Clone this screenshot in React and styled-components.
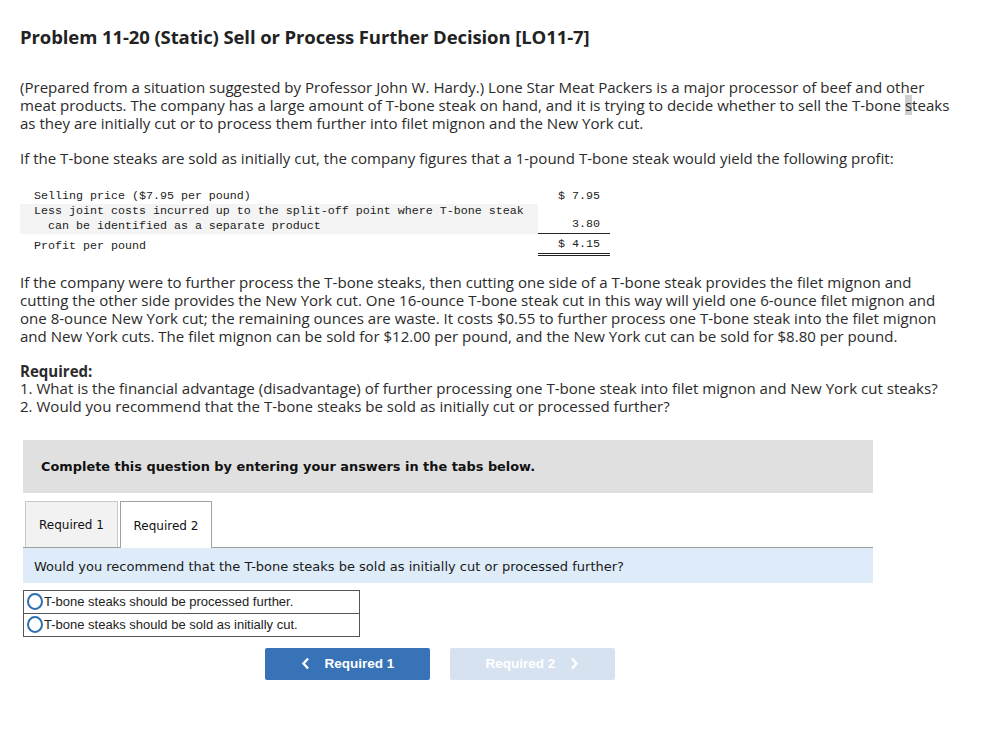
import React from 'react';
import styled, { createGlobalStyle } from 'styled-components';

const Global = createGlobalStyle`
    body {
        margin: 0;
        background: #fff;
        font-family: "Open Sans", sans-serif;
        color: #2b2b2b;
    }
`;

const Page = styled.div`
    width: 1007px;
    padding: 24px 20px 40px 20px;
    box-sizing: border-box;
`;

const Title = styled.h1`
    margin: 0 0 30px 0;
    font-size: 18.5px;
    font-weight: 700;
    color: #222;
    letter-spacing: -0.1px;
`;

const Para = styled.p`
    margin: 0 0 ${p => p.$mb || 18}px 0;
    font-size: 15.05px;
    line-height: 17.8px;
    white-space: nowrap;
`;

const Mark = styled.span`
    background: #cfcfcf;
`;

const Table = styled.div`
    display: grid;
    grid-template-columns: 518px 72px;
    margin: 0 0 18px 0;
    font-family: "Liberation Mono", monospace;
    font-size: 11.67px;
    color: #222;
`;

const Label = styled.div`
    padding: ${p => p.$pad || '0 0 0 14px'};
    line-height: 15px;
    background: ${p => (p.$shade ? '#f4f4f4' : 'transparent')};
    white-space: pre;
`;

const Amount = styled.div`
    text-align: right;
    padding: ${p => p.$pad || '0 10px 0 0'};
    line-height: 15px;
    display: flex;
    align-items: flex-end;
    justify-content: flex-end;
    border-bottom: ${p => p.$under || 'none'};
`;

const Required = styled.div`
    font-weight: 700;
    font-size: 15.05px;
    line-height: 18px;
`;

const Box = styled.div`
    margin: 24px 0 0 3px;
    width: 850px;
`;

const Banner = styled.div`
    background: #e0e0e0;
    height: 53px;
    display: flex;
    align-items: center;
    padding-left: 18px;
    font-family: "DejaVu Sans", Verdana, sans-serif;
    font-weight: 700;
    font-size: 12.9px;
    color: #111;
`;

const Tabs = styled.div`
    display: flex;
    gap: 2px;
    margin-top: 8px;
    padding-left: 2px;
    border-bottom: 1px solid #a0a0a0;
`;

const Tab = styled.div`
    width: ${p => p.$w}px;
    box-sizing: border-box;
    display: flex;
    align-items: center;
    justify-content: center;
    padding-top: 2px;
    font-family: "DejaVu Sans", Verdana, sans-serif;
    font-size: 12px;
    color: #111;
    border: 1px solid ${p => (p.$active ? '#a0a0a0' : '#c8c8c8')};
    border-bottom: none;
    background: ${p => (p.$active ? '#fff' : '#f2f2f2')};
    margin-bottom: ${p => (p.$active ? '-1px' : '0')};
    height: ${p => (p.$active ? 47 : 46)}px;
`;

const Question = styled.div`
    background: #ddecf8;
    height: 35px;
    display: flex;
    align-items: center;
    padding: 2px 0 0 11px;
    box-sizing: border-box;
    font-family: "DejaVu Sans", Verdana, sans-serif;
    font-size: 13px;
    color: #1a1a1a;
`;

const Options = styled.div`
    margin-top: 7px;
    width: 335px;
    border: 1px solid #555;
`;

const Option = styled.label`
    display: flex;
    align-items: center;
    height: 22px;
    gap: 1px;
    padding-left: 3px;
    font-family: "Liberation Sans", Arial, sans-serif;
    font-size: 13px;
    color: #222;
    & + & {
        border-top: 1px solid #555;
    }
`;

const Radio = styled.span`
    width: 12px;
    height: 13px;
    border: 2px solid #2c6fb0;
    border-radius: 50%;
    flex-shrink: 0;
`;

const Nav = styled.div`
    display: flex;
    gap: 20px;
    margin: 11px 0 0 242px;
`;

const NavButton = styled.button`
    width: 165px;
    height: 32px;
    border: none;
    border-radius: 2px;
    background: ${p => (p.$disabled ? '#d7e2f0' : '#3873b8')};
    color: #fff;
    font-family: "Liberation Sans", Arial, sans-serif;
    font-weight: 700;
    font-size: 13.5px;
    display: flex;
    align-items: center;
    justify-content: center;
    gap: 15px;
    padding: 0;
`;

const Chevron = ({ dir }) => (
    <svg width="9" height="13" viewBox="0 0 9 13">
        <path
            d={dir === 'left' ? 'M7 1.5 L2.5 6.5 L7 11.5' : 'M2 1.5 L6.5 6.5 L2 11.5'}
            fill="none"
            stroke="#fff"
            strokeWidth="2.4"
        />
    </svg>
);

export default function App() {
    return (
        <Page>
            <Global />
            <Title>Problem 11-20 (Static) Sell or Process Further Decision [LO11-7]</Title>
            <Para>
                (Prepared from a situation suggested by Professor John W. Hardy.) Lone Star Meat Packers is a major processor of beef and other<br />
                meat products. The company has a large amount of T-bone steak on hand, and it is trying to decide whether to sell the T-bone <Mark>s</Mark>teaks<br />
                as they are initially cut or to process them further into filet mignon and the New York cut.
            </Para>
            <Para $mb={21}>
                If the T-bone steaks are sold as initially cut, the company figures that a 1-pound T-bone steak would yield the following profit:
            </Para>
            <Table>
                <Label>Selling price ($7.95 per pound)</Label>
                <Amount>$ 7.95</Amount>
                <Label $shade>{'Less joint costs incurred up to the split-off point where T-bone steak\n  can be identified as a separate product'}</Label>
                <Amount $pad="0 10px 1px 0" $under="1px solid #222">3.80</Amount>
                <Label $pad="5px 0 1px 14px">Profit per pound</Label>
                <Amount $pad="3px 10px 1px 0" $under="3px double #222">$ 4.15</Amount>
            </Table>
            <Para $mb={17}>
                If the company were to further process the T-bone steaks, then cutting one side of a T-bone steak provides the filet mignon and<br />
                cutting the other side provides the New York cut. One 16-ounce T-bone steak cut in this way will yield one 6-ounce filet mignon and<br />
                one 8-ounce New York cut; the remaining ounces are waste. It costs $0.55 to further process one T-bone steak into the filet mignon<br />
                and New York cuts. The filet mignon can be sold for $12.00 per pound, and the New York cut can be sold for $8.80 per pound.
            </Para>
            <Required>Required:</Required>
            <Para $mb={0}>
                1. What is the financial advantage (disadvantage) of further processing one T-bone steak into filet mignon and New York cut steaks?
                <br />
                2. Would you recommend that the T-bone steaks be sold as initially cut or processed further?
            </Para>
            <Box>
                <Banner>Complete this question by entering your answers in the tabs below.</Banner>
                <Tabs>
                    <Tab $w={93}>Required 1</Tab>
                    <Tab $w={92} $active>Required 2</Tab>
                </Tabs>
                <Question>Would you recommend that the T-bone steaks be sold as initially cut or processed further?</Question>
                <Options>
                    <Option><Radio />T-bone steaks should be processed further.</Option>
                    <Option><Radio />T-bone steaks should be sold as initially cut.</Option>
                </Options>
                <Nav>
                    <NavButton><Chevron dir="left" />Required 1</NavButton>
                    <NavButton $disabled>Required 2<Chevron dir="right" /></NavButton>
                </Nav>
            </Box>
        </Page>
    );
}
